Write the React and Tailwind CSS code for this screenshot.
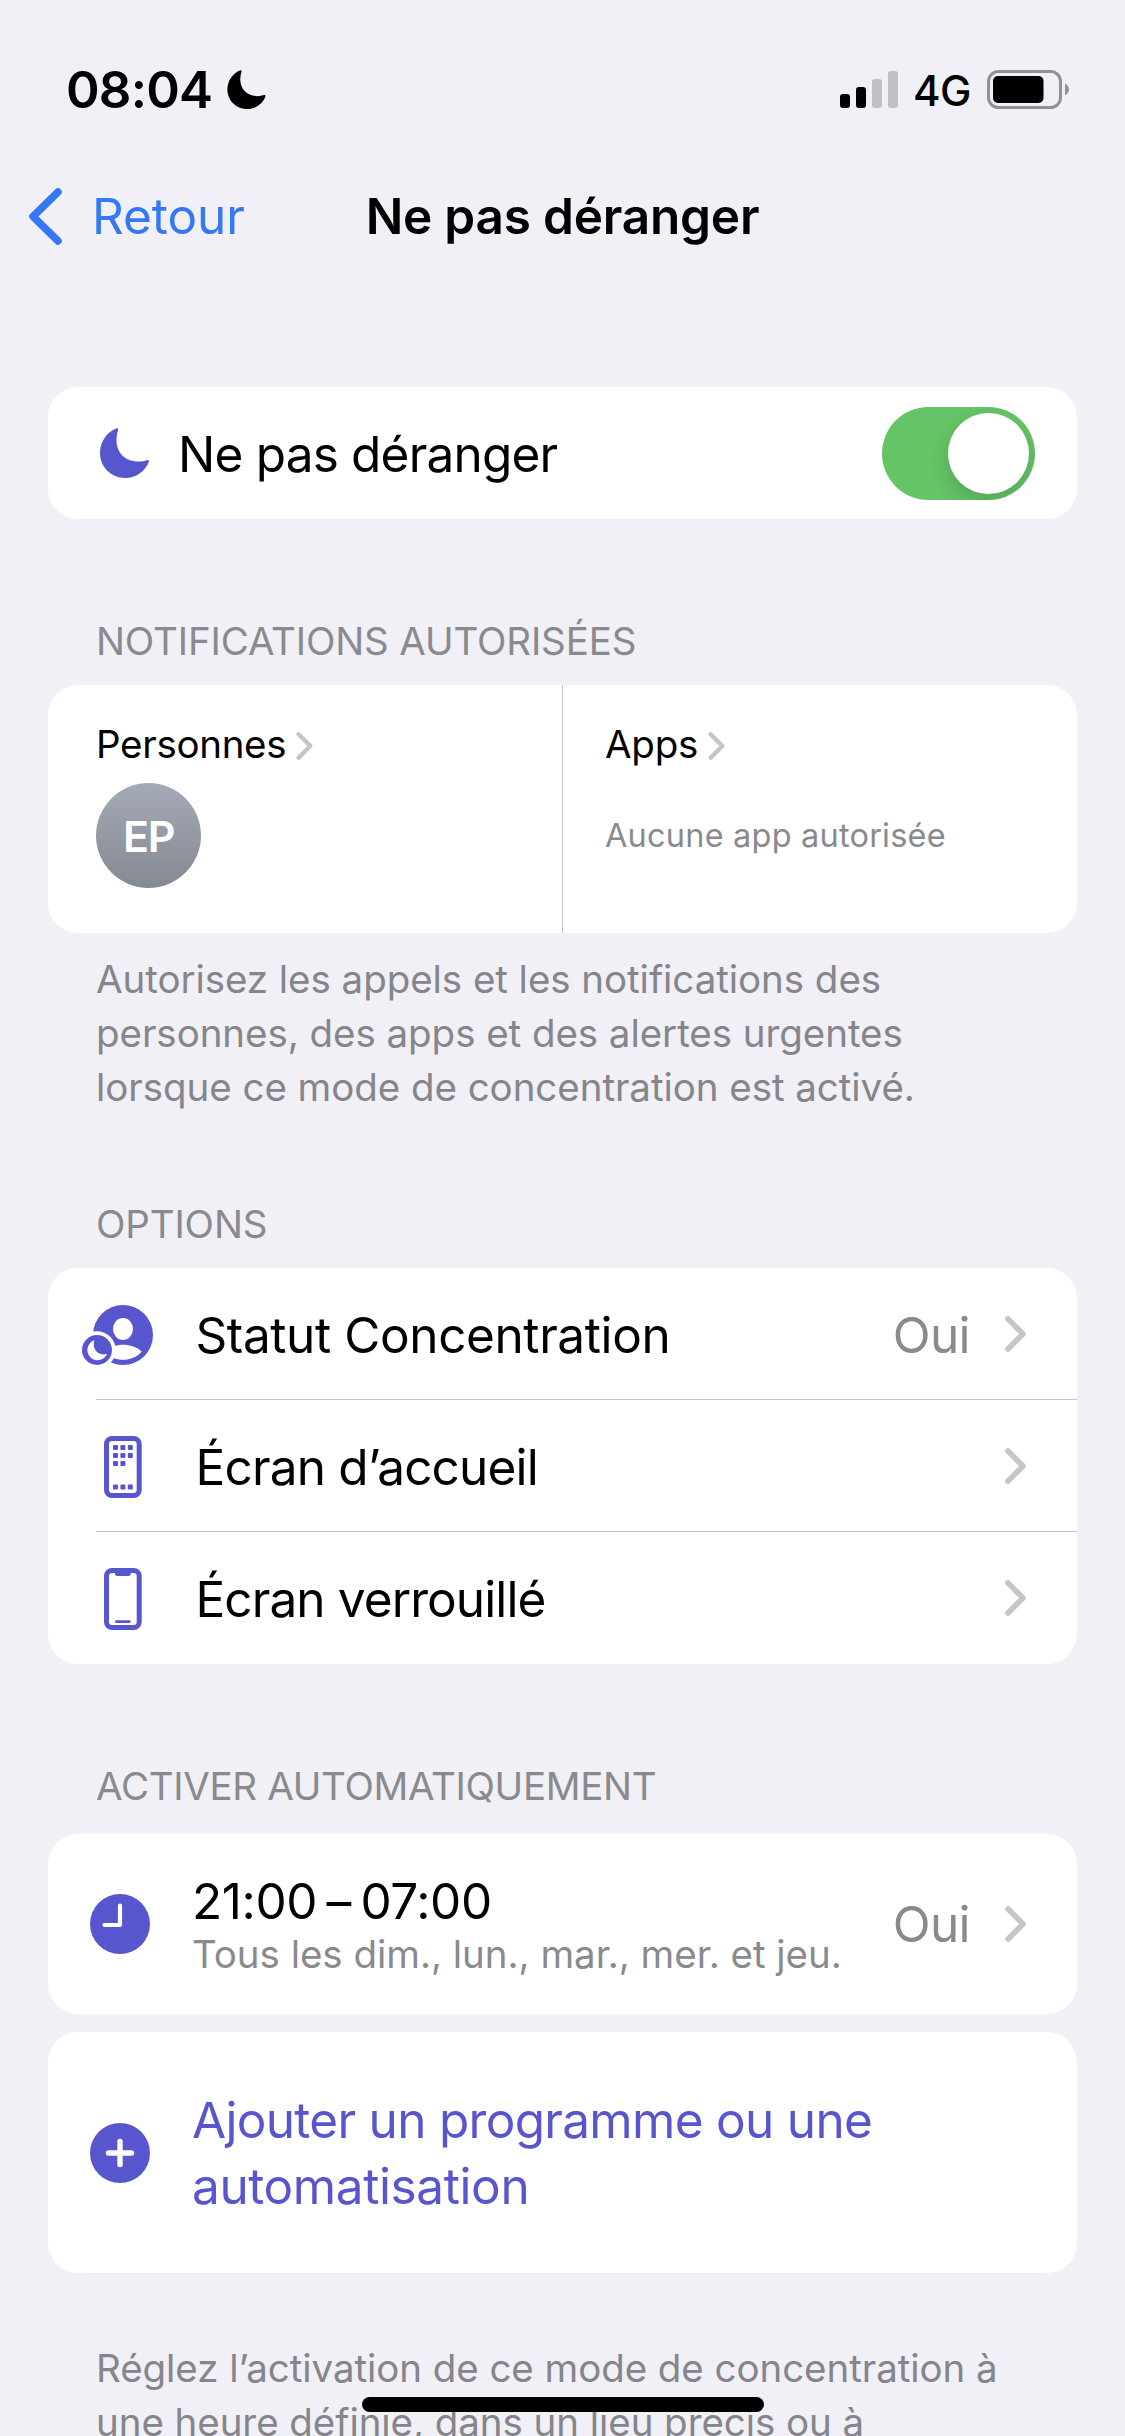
import React, { useState } from 'react';

// Moon used in the status bar and in the main switch row
const Moon = ({ className }) => (
  <svg className={className} viewBox="0 0 49 50" fill="currentColor">
    <path d="M16 .5C17.5 0 18.5 1 18 2.5 17 5.5 16.5 9 16.5 12 16.5 25 25.5 33.5 38.5 33.5 41.5 33.5 44.5 33 47 32.2 48.3 31.8 49.3 32.8 48.8 34 45 43.5 36 50 25.5 50 11 50 0 39 0 25 0 14 6.5 4.5 16 .5Z" />
  </svg>
);

const Chevron = ({ className }) => (
  <svg className={className} viewBox="0 0 21 36" fill="none" stroke="currentColor" strokeWidth="5.6" strokeLinecap="round" strokeLinejoin="round">
    <path d="M3 3l15 15L3 33" />
  </svg>
);

const PersonIcon = () => (
  <svg className="mt-[3px] h-[60px] w-[71px]" viewBox="0 0 71 60">
    <circle cx="41" cy="30" r="30" fill="#5856ce" />
    <ellipse cx="41" cy="24" rx="10" ry="11" fill="#fff" />
    <path d="M22 46.7C27 42 34 39.8 41 39.8S55 42 59.7 46.7C55 52 48 54.8 41 54.8S27 52 22 46.7Z" fill="#fff" />
    <circle cx="15" cy="45" r="18.7" fill="#fff" />
    <circle cx="15" cy="45" r="15" fill="#5856ce" />
    <path d="M12.4 35.3A10.2 10.2 0 1 0 25 49C17 51 9.5 45 12.4 35.3Z" fill="#fff" />
  </svg>
);

const HomeScreenIcon = () => {
  const dots = [[31, 9], [38.4, 9], [45.8, 9], [31, 17], [38.4, 17], [45.8, 17], [31, 25], [38.4, 25], [31, 48.4], [38.4, 48.4], [45.8, 48.4]];
  return (
    <svg className="mt-[3px] h-[62px] w-[71px]" viewBox="0 0 71 62">
      <rect x="24.5" y="2.5" width="32.7" height="57" rx="5.5" fill="none" stroke="#5856ce" strokeWidth="5" />
      {dots.map(([x, y]) => (
        <rect key={`${x}-${y}`} x={x} y={y} width="5" height="5" rx="1" fill="#5856ce" />
      ))}
    </svg>
  );
};

const LockScreenIcon = () => (
  <svg className="mt-[2px] h-[62px] w-[71px]" viewBox="0 0 71 62" fill="#5856ce">
    <rect x="24.5" y="2.5" width="32.7" height="57" rx="5.5" fill="none" stroke="#5856ce" strokeWidth="5" />
    <path d="M32 4h17.7a1.5 1.5 0 0 0-1 1.5V6a2 2 0 0 1-2 2H35a2 2 0 0 1-2-2V5.5A1.5 1.5 0 0 0 32 4Z" />
    <rect x="33" y="52.2" width="15.7" height="2.8" rx="1.4" />
  </svg>
);

const SectionTitle = ({ className, children }) => (
  <h2 className={`flex items-end pl-12 text-[38.5px] leading-[54px] text-[#8a8a8e] ${className}`}>{children}</h2>
);

const options = [
  { label: 'Statut Concentration', value: 'Oui', icon: <PersonIcon />, tracking: 'tracking-[-0.4px]' },
  { label: 'Écran d’accueil', icon: <HomeScreenIcon />, tracking: 'tracking-[-0.8px]' },
  { label: 'Écran verrouillé', icon: <LockScreenIcon />, tracking: 'tracking-[-0.9px]' },
];

function StatusBar() {
  return (
    <div className="flex h-[178px] items-center pr-[56px] pl-[66px]">
      <span className="w-[161px] text-[51px] font-semibold leading-none tracking-[-0.8px]">08:04</span>
      <Moon className="h-[39px] w-[39px]" />
      <div className="ml-auto flex items-center">
        {/* Signal strength, two bars out of four */}
        <div className="flex h-[37px] items-end gap-[6px]">
          <div className="h-[14px] w-[10px] rounded-[3px] bg-black"></div>
          <div className="h-[21px] w-[10px] rounded-[3px] bg-black"></div>
          <div className="h-[29px] w-[10px] rounded-[3px] bg-[#c1c0c5]"></div>
          <div className="h-[37px] w-[10px] rounded-[3px] bg-[#c1c0c5]"></div>
        </div>
        <span className="ml-[15px] w-[74px] pt-[3px] text-[42px] font-medium leading-none tracking-[-0.5px]">4G</span>
        <svg className="h-[39px] w-[82px]" viewBox="0 0 82 39">
          <rect x="1.5" y="1.5" width="72" height="36" rx="10" fill="none" stroke="#929195" strokeWidth="3" />
          <rect x="6" y="6" width="50.5" height="27" rx="5" fill="#000" />
          <path d="M78 13.5q4 2.5 4 6t-4 6Z" fill="#929195" />
        </svg>
      </div>
    </div>
  );
}

function App() {
  const [enabled, setEnabled] = useState(true);

  return (
    <div className="relative h-[2436px] w-[1125px] overflow-hidden bg-[#f1f0f6] font-['Inter','Liberation_Sans',sans-serif] text-black">
      <StatusBar />

      <header className="grid h-[76px] grid-cols-[1fr_auto_1fr] items-center text-[49.5px] leading-[76px]">
        <button className="flex items-center pl-[28px] text-[#3478f6]">
          <svg className="h-[57px] w-[34px]" viewBox="0 0 34 57" fill="none" stroke="currentColor" strokeWidth="7.5" strokeLinecap="round" strokeLinejoin="round">
            <path d="M30 4L5 28.5 30 53" />
          </svg>
          <span className="ml-[30px] tracking-[-0.1px]">Retour</span>
        </button>
        <h1 className="font-semibold tracking-[-0.2px]">Ne pas déranger</h1>
      </header>

      <main className="px-12">
        <div className="mt-[133px] flex h-[132px] items-center rounded-[30px] bg-white pr-[42px] pl-[52px]">
          <Moon className="h-[50px] w-[49px] text-[#5856ce]" />
          <span className="ml-[29px] pt-[2px] text-[49.5px] tracking-[-0.8px]">Ne pas déranger</span>
          <button
            role="switch"
            aria-checked={enabled}
            onClick={() => setEnabled(!enabled)}
            className={`ml-auto flex h-[93px] w-[153px] overflow-hidden rounded-full p-[6px] ${enabled ? 'justify-end bg-[#65c466]' : 'justify-start bg-[#e9e9eb]'}`}
          >
            <span className="size-[81px] rounded-full bg-white shadow-[0_8px_20px_rgba(0,0,0,0.16)]"></span>
          </button>
        </div>

        <SectionTitle className="h-[166px] pb-[17px] tracking-[-0.15px]">NOTIFICATIONS AUTORISÉES</SectionTitle>
        <div className="grid h-[248px] grid-cols-[514px_1fr] rounded-[30px] bg-white">
          <div className="pt-[32px] pl-12">
            <div className="flex items-center text-[38.5px] leading-[54px]">
              <span className="tracking-[-0.3px]">Personnes</span>
              <Chevron className="mt-[3px] ml-[10px] h-[28px] w-[17px] text-[#c5c5c7]" />
            </div>
            <div className="mt-3 flex size-[105px] items-center justify-center rounded-full bg-linear-to-b from-[#a5aab8] to-[#858990] pt-[2px] text-[43px] font-semibold tracking-[-1.5px] text-white">
              EP
            </div>
          </div>
          <div className="border-l border-[#c6c6c8] pt-[32px] pl-[42px]">
            <div className="flex items-center text-[38.5px] leading-[54px]">
              <span className="tracking-[-0.2px]">Apps</span>
              <Chevron className="mt-[3px] ml-[10px] h-[28px] w-[17px] text-[#c5c5c7]" />
            </div>
            <div className="mt-3 flex h-[105px] items-center pt-[2px] text-[32.5px] tracking-[0.2px] text-[#8a8a8e]">Aucune app autorisée</div>
          </div>
        </div>
        <p className="mt-[19px] pl-12 text-[38.5px] leading-[54px] tracking-[-0.05px] text-[#85858b]">
          Autorisez les appels et les notifications des<br />
          personnes, des apps et des alertes urgentes<br />
          lorsque ce mode de concentration est activé.
        </p>

        <SectionTitle className="h-[154px] pb-[17px] tracking-[-0.15px]">OPTIONS</SectionTitle>
        <ul className="rounded-[30px] bg-white pb-px">
          {options.map((option, index) => (
            <li key={option.label}>
              <div className="flex h-[131px] items-center pr-[51px] pl-[34px] text-[49.5px]">
                {option.icon}
                <span className={`ml-[42.5px] pt-[3px] ${option.tracking}`}>{option.label}</span>
                <span className="ml-auto pt-[3px] tracking-[-0.6px] text-[#8a8a8e]">{option.value}</span>
                <Chevron className="mt-px ml-[35px] h-[36px] w-[21px] text-[#c5c5c7]" />
              </div>
              {index < options.length - 1 && <div className="ml-12 h-px bg-[#c6c6c8]"></div>}
            </li>
          ))}
        </ul>

        <SectionTitle className="h-[170px] pb-[21px] tracking-[-0.33px]">ACTIVER AUTOMATIQUEMENT</SectionTitle>
        <div className="flex h-[180px] items-center rounded-[30px] bg-white pr-[51px] pl-[42px]">
          <svg className="size-[60px]" viewBox="0 0 60 60">
            <circle cx="30" cy="30" r="30" fill="#5856ce" />
            <path d="M30 11.5V31H14.5" fill="none" stroke="#fff" strokeWidth="4.2" strokeLinecap="round" strokeLinejoin="round" />
          </svg>
          <div className="ml-[42px]">
            <div className="text-[49.5px] leading-[60px] tracking-[-0.4px] [word-spacing:-4px]">21:00 – 07:00</div>
            <div className="text-[38.5px] leading-[46px] tracking-[-0.04px] text-[#8a8a8e]">Tous les dim., lun., mar., mer. et jeu.</div>
          </div>
          <span className="ml-auto pt-px text-[49.5px] tracking-[-0.6px] text-[#8a8a8e]">Oui</span>
          <Chevron className="ml-[35px] h-[36px] w-[21px] text-[#c5c5c7]" />
        </div>

        <div className="mt-[18px] flex h-[241px] items-center rounded-[30px] bg-white pl-[42px]">
          <svg className="size-[60px]" viewBox="0 0 60 60">
            <circle cx="30" cy="30" r="30" fill="#5856ce" />
            <path d="M30 18.5v23M18.5 30h23" stroke="#fff" strokeWidth="5.4" strokeLinecap="round" />
          </svg>
          <div className="ml-[42px] text-[49.5px] leading-[66px] text-[#5856ce]">
            <span className="tracking-[-0.7px]">Ajouter un programme ou une</span><br />
            <span className="tracking-[-0.4px]">automatisation</span>
          </div>
        </div>

        <p className="mt-[68px] pl-12 text-[38.5px] leading-[54px] tracking-[-0.06px] whitespace-nowrap text-[#85858b]">
          Réglez l’activation de ce mode de concentration à<br />
          une heure définie, dans un lieu précis ou à
        </p>
      </main>

      {/* Home indicator, floats over the text */}
      <div className="absolute bottom-6 left-[362px] h-[15px] w-[402px] rounded-full bg-black"></div>
    </div>
  );
}

export default App;
